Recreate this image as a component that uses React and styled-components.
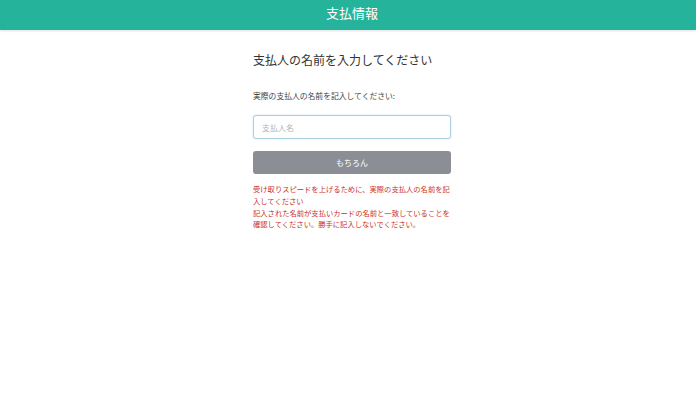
import React, { useState } from 'react';
import styled, { createGlobalStyle } from 'styled-components';

const GlobalStyle = createGlobalStyle`
  html, body {
    margin: 0;
    padding: 0;
    background: #fff;
    font-family: "Noto Sans CJK JP", "Noto Sans", sans-serif;
  }
`;

const Header = styled.header`
  height: 30px;
  background: #26b39c;
  color: #fff;
  display: flex;
  align-items: center;
  justify-content: center;
  font-size: 13px;
  box-shadow: 0 1px 2px rgba(0, 0, 0, 0.12);
  padding: 0 0 6px 8px;
  box-sizing: border-box;
`;

const Page = styled.div`
  padding-left: 8px;
`;

const Main = styled.main`
  width: 198px;
  margin: 0 auto;
  padding-top: 21px;
`;

const Heading = styled.h2`
  margin: 0;
  font-size: 12px;
  font-weight: 400;
  color: #333;
  line-height: 18px;
`;

const Label = styled.label`
  display: block;
  margin-top: 21px;
  font-size: 7.8px;
  color: #444;
  line-height: 12px;
`;

const NameInput = styled.input`
  display: block;
  box-sizing: border-box;
  width: 100%;
  height: 24px;
  margin-top: 13px;
  padding: 0 8px;
  border: 1px solid #a9cfdd;
  border-radius: 3px;
  font-family: inherit;
  font-size: 8px;
  color: #333;
  outline: none;
  box-shadow: 0 0 2px rgba(102, 175, 233, 0.35);

  &::placeholder {
    color: #b0b3b8;
  }
`;

const SubmitButton = styled.button`
  display: block;
  width: 100%;
  height: 23px;
  margin-top: 12px;
  border: none;
  border-radius: 3px;
  background: #8b8e94;
  color: #fff;
  font-family: inherit;
  font-size: 8px;
  cursor: pointer;
`;

const Notice = styled.p`
  margin: 10px 0 0;
  font-size: 7.3px;
  line-height: 11.8px;
  color: #c9302c;
`;

const App = () => {
  const [name, setName] = useState('');

  return (
    <>
      <GlobalStyle />
      <Header>支払情報</Header>
      <Page>
        <Main>
          <Heading>支払人の名前を入力してください</Heading>
          <Label htmlFor="payer">実際の支払人の名前を記入してください:</Label>
          <NameInput
            id="payer"
            type="text"
            placeholder="支払人名"
            value={name}
            onChange={(e) => setName(e.target.value)}
          />
          <SubmitButton>もちろん</SubmitButton>
          <Notice>
            受け取りスピードを上げるために、実際の支払人の名前を記入してください
            <br />
            記入された名前が支払いカードの名前と一致していることを確認してください。勝手に記入しないでください。
          </Notice>
        </Main>
      </Page>
    </>
  );
};

export default App;
